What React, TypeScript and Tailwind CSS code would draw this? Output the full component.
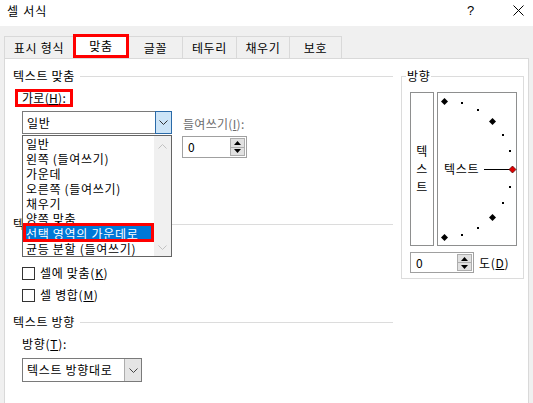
function Chevron({ className = "" }: { className?: string }) {
  return (
    <svg width="9" height="5" viewBox="0 0 9 5" className={className}>
      <polyline points="0.5,0.5 4.5,4.5 8.5,0.5" fill="none" stroke="currentColor" strokeWidth="1" />
    </svg>
  );
}

function ChevronUp({ className = "" }: { className?: string }) {
  return (
    <svg width="9" height="5" viewBox="0 0 9 5" className={className}>
      <polyline points="0.5,4.5 4.5,0.5 8.5,4.5" fill="none" stroke="currentColor" strokeWidth="1" />
    </svg>
  );
}

function Spin({ size }: { size: string }) {
  return (
    <div className={`flex items-stretch border border-[#a0a0a0] bg-white ${size}`}>
      <span className="flex-1 pl-[5px] flex items-center">0</span>
      <div className="flex flex-col w-[15px] my-px mr-px">
        <div className="flex-1 bg-[#e1e1e1] border border-[#adadad] flex items-center justify-center">
          <svg width="7" height="4" viewBox="0 0 7 4">
            <polygon points="0,4 3.5,0 7,4" fill="#000" />
          </svg>
        </div>
        <div className="flex-1 bg-[#e1e1e1] border border-t-0 border-[#adadad] flex items-center justify-center">
          <svg width="7" height="4" viewBox="0 0 7 4">
            <polygon points="0,0 3.5,4 7,0" fill="#000" />
          </svg>
        </div>
      </div>
    </div>
  );
}

function GroupHeader({ title }: { title: string }) {
  return (
    <div className="flex items-center h-[16px]">
      <span>{title}</span>
      <div className="flex-1 h-px bg-[#dcdcdc] ml-[5px]" />
    </div>
  );
}

function Check({ label, k }: { label: string; k: string }) {
  return (
    <div className="flex items-center h-[22px] ml-[9px]">
      <div className="w-[13px] h-[13px] border border-[#333333] bg-white" />
      <span className="ml-[5px]">
        {label}(<u>{k}</u>)
      </span>
    </div>
  );
}

const items = [
  "일반",
  "왼쪽 (들여쓰기)",
  "가운데",
  "오른쪽 (들여쓰기)",
  "채우기",
  "양쪽 맞춤",
  "선택 영역의 가운데로",
  "균등 분할 (들여쓰기)",
];

function Orientation() {
  const cx = 7;
  const cy = 77;
  const r = 68;
  const dots = [75, 60, 30, 15, -15, -30, -60, -75].map((a) => {
    const t = (a * Math.PI) / 180;
    return [cx + r * Math.cos(t), cy - r * Math.sin(t)];
  });
  const diamonds = [90, 45, -45, -90].map((a) => {
    const t = (a * Math.PI) / 180;
    return [cx + r * Math.cos(t), cy - r * Math.sin(t)];
  });
  const dia = (x: number, y: number) =>
    `${x},${y - 3.5} ${x + 3.5},${y} ${x},${y + 3.5} ${x - 3.5},${y}`;
  return (
    <svg width="80" height="154" viewBox="0 0 80 154" className="absolute -left-px -top-px">
      {dots.map(([x, y], i) => (
        <rect key={i} x={Math.round(x) - 1} y={Math.round(y) - 1} width="2" height="2" fill="#000" />
      ))}
      {diamonds.map(([x, y], i) => (
        <polygon key={i} points={dia(Math.round(x) + 0.5, Math.round(y) + 0.5)} fill="#000" />
      ))}
      <line x1="47" y1="77.5" x2="73" y2="77.5" stroke="#000" strokeWidth="1" />
      <polygon points={dia(75.5, 77.5)} fill="#e00000" stroke="#400" strokeWidth="0.7" />
    </svg>
  );
}

export default function App() {
  return (
    <div className="w-[533px] h-[403px] overflow-hidden bg-[#f0f0f0] text-[12px] leading-[16px] tracking-[0.7px] text-black font-['Noto_Sans_CJK_KR',sans-serif]">
      {/* title bar */}
      <div className="h-[26px] bg-white flex items-center pl-[7px] pr-[9px]">
        <span className="flex-1 pb-[4px] tracking-[1.2px]">셀 서식</span>
        <span className="text-[13px] mr-[38px] pb-[4px] font-['Liberation_Sans',sans-serif]">?</span>
        <svg width="11" height="11" viewBox="0 0 11 11" className="mb-[5px]">
          <path d="M0.5 0.5 L10.5 10.5 M10.5 0.5 L0.5 10.5" stroke="#000" strokeWidth="1" />
        </svg>
      </div>

      {/* tabs */}
      <div className="h-[32px] flex items-end pl-[4px]">
        <div className="w-[69px] h-[22px] border-t border-l border-[#d9d9d9] flex items-center justify-center">표시 형식</div>
        <div className="w-[56px] h-[24px] bg-white border-[3px] border-[#ff0000] flex items-center justify-center">맞춤</div>
        <div className="w-[53px] h-[22px] border-t border-[#d9d9d9] flex items-center justify-center">글꼴</div>
        <div className="w-[54px] h-[22px] border-t border-l border-[#d9d9d9] flex items-center justify-center">테두리</div>
        <div className="w-[53px] h-[22px] border-t border-l border-[#d9d9d9] flex items-center justify-center">채우기</div>
        <div className="w-[53px] h-[22px] border-t border-l border-r border-[#d9d9d9] flex items-center justify-center">보호</div>
      </div>

      {/* panel */}
      <div className="ml-[4px] w-[525px] h-[360px] border border-[#d9d9d9] bg-white flex">
        {/* left column */}
        <div className="w-[388px] pl-[8px] pt-[9px] flex flex-col">
          <GroupHeader title="텍스트 맞춤" />
          <div className="mt-[5px] ml-[2px] w-[58px] h-[18px] border-[3px] border-[#ff0000] flex items-center pl-[4px]">
            <span className="tracking-[0.3px]">
              가로(<u>H</u>):
            </span>
          </div>

          <div className="mt-[4px] ml-[9px] flex items-start">
            <div className="relative w-[150px] h-[23px] border border-[#7a7a7a] flex">
              <span className="flex-1 pl-[4px] flex items-center">일반</span>
              <div className="w-[17px] -my-px -mr-px bg-[#cce4f7] border border-[#2a6aa8] flex items-center justify-center text-[#333]">
                <Chevron />
              </div>

              {/* open list */}
              <div className="absolute -left-px top-[23px] w-[150px] h-[122px] border border-[#646464] bg-white z-10 flex">
                <div className="flex-1 flex flex-col">
                  {items.map((it, i) =>
                    i === 6 ? (
                      <div key={it} className="relative h-[15px] leading-[15px] pl-[3px] bg-[#0078d7] text-white">
                        {it}
                        <div className="absolute -top-[3px] -bottom-px left-0 right-0 border-[3px] border-[#ff0000]" />
                      </div>
                    ) : (
                      <div key={it} className="h-[15px] leading-[15px] pl-[3px]">
                        {it}
                      </div>
                    )
                  )}
                </div>
                <div className="w-[17px] bg-[#f0f0f0] flex flex-col justify-between items-center pt-[8px] pb-[6px] text-[#c2c2c2]">
                  <ChevronUp />
                  <Chevron />
                </div>
              </div>
            </div>

            <div className="ml-[10px] mt-[5px] flex flex-col">
              <span className="pl-px text-[#6d6d6d] tracking-[0.3px]">
                들여쓰기(<u>I</u>):
              </span>
              <div className="mt-[4px]">
                <Spin size="w-[65px] h-[22px]" />
              </div>
            </div>
          </div>

          <div className="mt-[58px]">
            <GroupHeader title="텍스트 제어" />
          </div>
          {/* first check row sits under the open list */}
          <div className="mt-[8px] h-[22px]" />
          <Check label="셀에 맞춤" k="K" />
          <Check label="셀 병합" k="M" />

          <div className="mt-[8px]">
            <GroupHeader title="텍스트 방향" />
          </div>
          <div className="mt-[6px] ml-[9px]">
            방향(<u>T</u>):
          </div>
          <div className="mt-[6px] ml-[9px] w-[120px] h-[24px] border border-[#7a7a7a] flex">
            <span className="flex-1 pl-[4px] flex items-center">텍스트 방향대로</span>
            <div className="w-[17px] bg-[#e5e5e5] border-l border-[#adadad] flex items-center justify-center text-[#444]">
              <Chevron />
            </div>
          </div>
        </div>

        {/* right column */}
        <div className="ml-[8px] w-[123px] pt-[17px]">
          <div className="relative h-[203px] border border-[#dcdcdc] pl-[8px] pt-[15px]">
            <span className="absolute left-[4px] -top-[9px] bg-white px-px">방향</span>
            <div className="flex gap-[3px]">
              <div className="w-[24px] h-[154px] border border-[#8e8f8f] flex flex-col items-center justify-center leading-[18px]">
                <span>텍</span>
                <span>스</span>
                <span>트</span>
              </div>
              <div className="relative w-[80px] h-[154px] border border-[#8e8f8f] flex items-center pl-[6px]">
                <span className="pb-px">텍스트</span>
                <Orientation />
              </div>
            </div>
            <div className="mt-[6px] flex items-center">
              <Spin size="w-[64px] h-[21px]" />
              <span className="ml-[5px]">
                도(<u>D</u>)
              </span>
            </div>
          </div>
        </div>
      </div>
    </div>
  );
}
